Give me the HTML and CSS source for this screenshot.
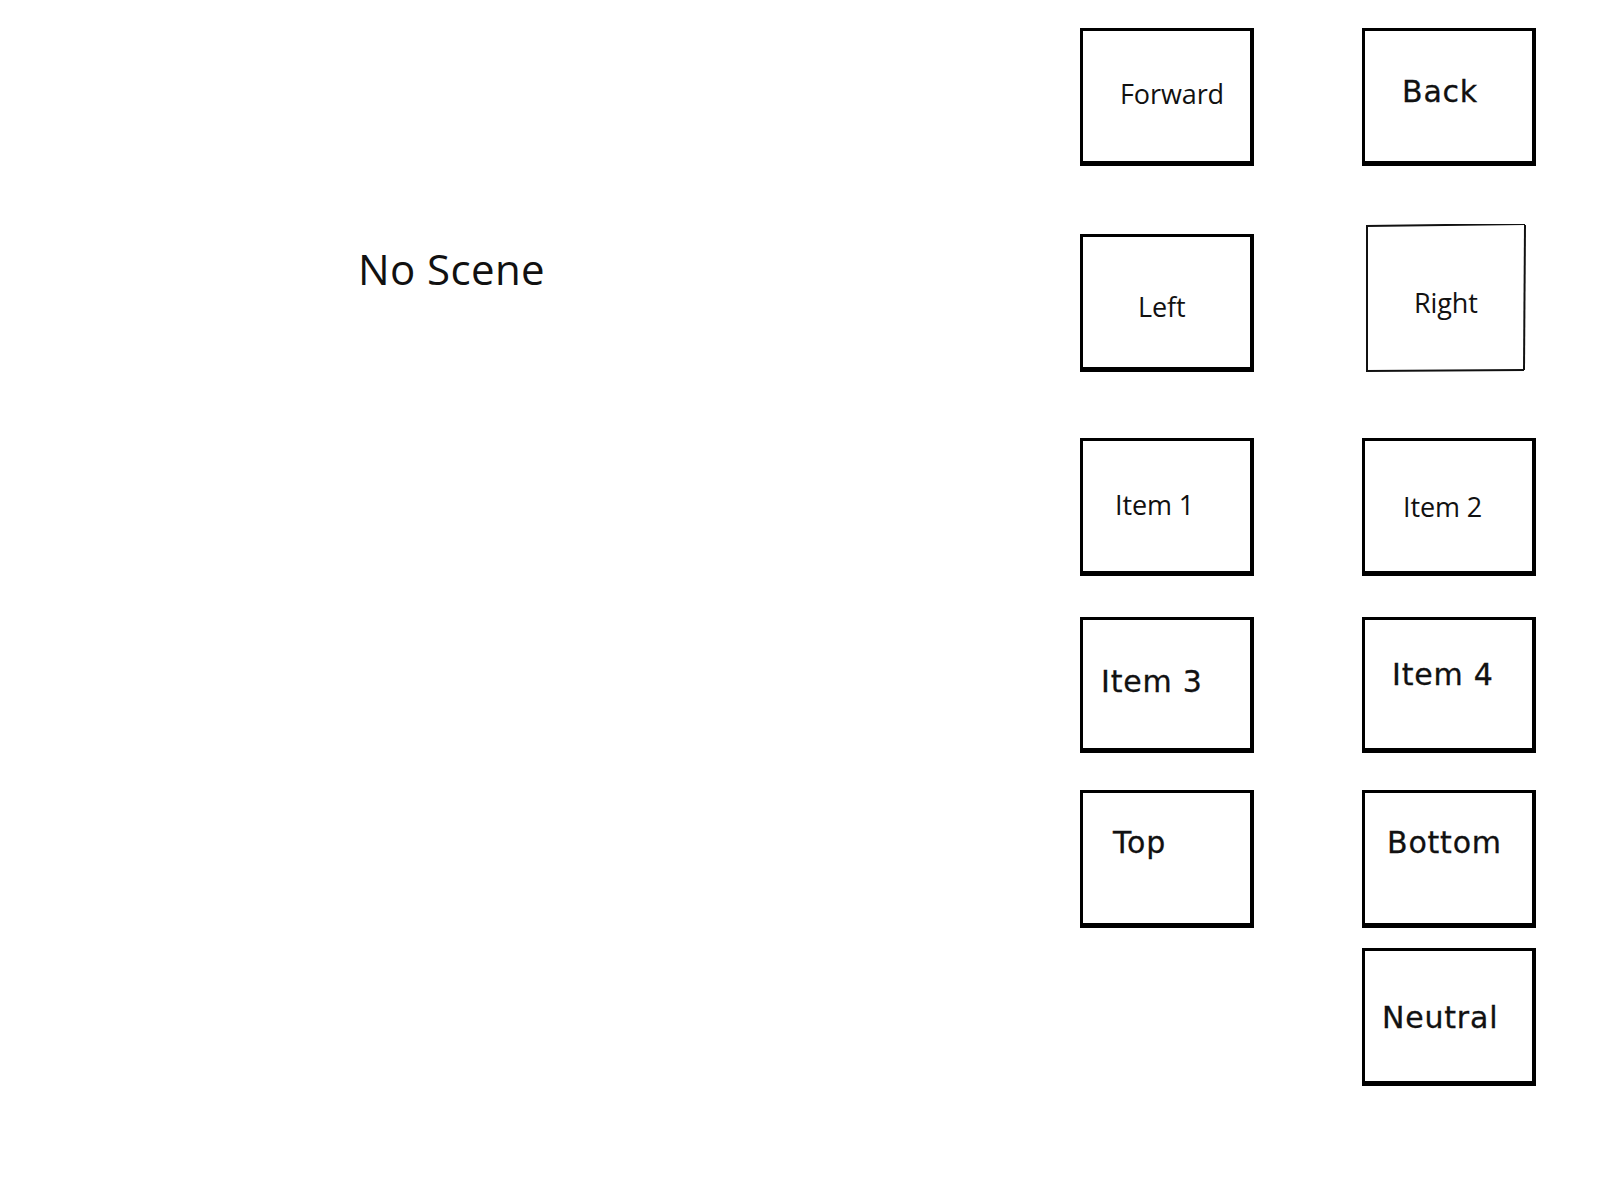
FILE: index.html
```html
<!DOCTYPE html>
<html lang="en">

<head>
    <meta charset="UTF-8">
    <meta name="viewport" content="width=device-width, initial-scale=1.0">
    <title>Scene Controller</title>
    <link rel="stylesheet" href="styles.css">
</head>

<body>
    <div class="screen">
        <div class="stage">
            <h1 class="scene-title">No Scene</h1>
        </div>

        <div class="panel">
            <div class="pad-row row-move">
                <button class="pad-btn humanist btn-forward"><span>Forward</span></button>
                <button class="pad-btn wide btn-back"><span>Back</span></button>
            </div>
            <div class="pad-row row-turn">
                <button class="pad-btn humanist btn-left"><span>Left</span></button>
                <button class="pad-btn humanist btn-right">
                    <svg class="sketch" viewBox="0 0 161 149" width="161" height="149">
                        <path d="M0 2 L159 0" />
                        <path d="M159 1 L158 146" />
                        <path d="M0 147 L158 146" />
                        <path d="M1 2 L1 147" />
                    </svg>
                    <span>Right</span>
                </button>
            </div>
            <div class="pad-row row-items-a">
                <button class="pad-btn humanist btn-item1"><span>Item 1</span></button>
                <button class="pad-btn humanist btn-item2"><span>Item 2</span></button>
            </div>
            <div class="pad-row row-items-b">
                <button class="pad-btn wide btn-item3"><span>Item 3</span></button>
                <button class="pad-btn wide btn-item4"><span>Item 4</span></button>
            </div>
            <div class="pad-row row-view">
                <button class="pad-btn wide btn-top"><span>Top</span></button>
                <button class="pad-btn wide btn-bottom"><span>Bottom</span></button>
            </div>
            <div class="pad-row row-reset">
                <div class="pad-empty"></div>
                <button class="pad-btn wide btn-neutral"><span>Neutral</span></button>
            </div>
        </div>
    </div>
</body>

</html>
```

FILE: styles.css
```css
body {
    margin: 0;
    background: #fff;
    color: #111;
}

.screen {
    display: flex;
    width: 1600px;
    height: 1200px;
}

/* left side: scene view */
.stage {
    width: 1080px;
    flex-shrink: 0;
}

.scene-title {
    margin: 248px 0 0 358px;
    font-family: 'Open Sans', sans-serif;
    font-size: 42px;
    font-weight: 400;
    line-height: 1;
    letter-spacing: 0.4px;
}

/* right side: button pad */
.panel {
    display: flex;
    flex-direction: column;
    padding-top: 28px;
}

.pad-row {
    display: flex;
    gap: 108px;
    height: 138px;
}

.row-turn {
    margin-top: 68px;
}

.row-items-a {
    margin-top: 66px;
}

.row-items-b {
    margin-top: 41px;
    height: 136px;
}

.row-view {
    margin-top: 37px;
}

.row-reset {
    margin-top: 20px;
}

.pad-empty {
    width: 174px;
}

.pad-btn {
    box-sizing: border-box;
    display: flex;
    align-items: flex-start;
    justify-content: flex-start;
    width: 174px;
    height: 100%;
    margin: 0;
    background: #fff;
    color: #111;
    border-style: solid;
    border-color: #000;
    border-width: 3px 4px 5px 3px;
    text-align: left;
    line-height: 1;
    cursor: pointer;
}

.pad-btn:active {
    background: #f3f3f3;
}

.humanist {
    font-family: 'Open Sans', sans-serif;
    font-size: 27px;
    letter-spacing: -0.1px;
}

.wide {
    font-family: 'DejaVu Sans', Verdana, sans-serif;
    font-size: 30px;
    letter-spacing: 0.8px;
    -webkit-text-stroke: 0.3px #111;
}

.btn-forward { padding: 49px 0 0 37px; }
.btn-back { padding: 46px 0 0 37px; }
.btn-left { padding: 56px 0 0 55px; }
.btn-item1 { padding: 50px 0 0 32px; }
.btn-item2 { padding: 52px 0 0 38px; }
.btn-item3 { padding: 47px 0 0 18px; }
.btn-item4 { padding: 40px 0 0 27px; }
.btn-top { padding: 35px 0 0 30px; }
.btn-bottom { padding: 35px 0 0 22px; }
.btn-neutral { padding: 52px 0 0 17px; }

/* hand-drawn looking frame */
.btn-right {
    position: relative;
    width: 161px;
    height: 149px;
    margin: -10px 0 0 4px;
    border: none;
    padding: 65px 0 0 48px;
    background: transparent;
}

.sketch {
    position: absolute;
    top: 0;
    left: 0;
    fill: none;
    stroke: #111;
    stroke-width: 2;
}

.btn-right span {
    position: relative;
}
```
